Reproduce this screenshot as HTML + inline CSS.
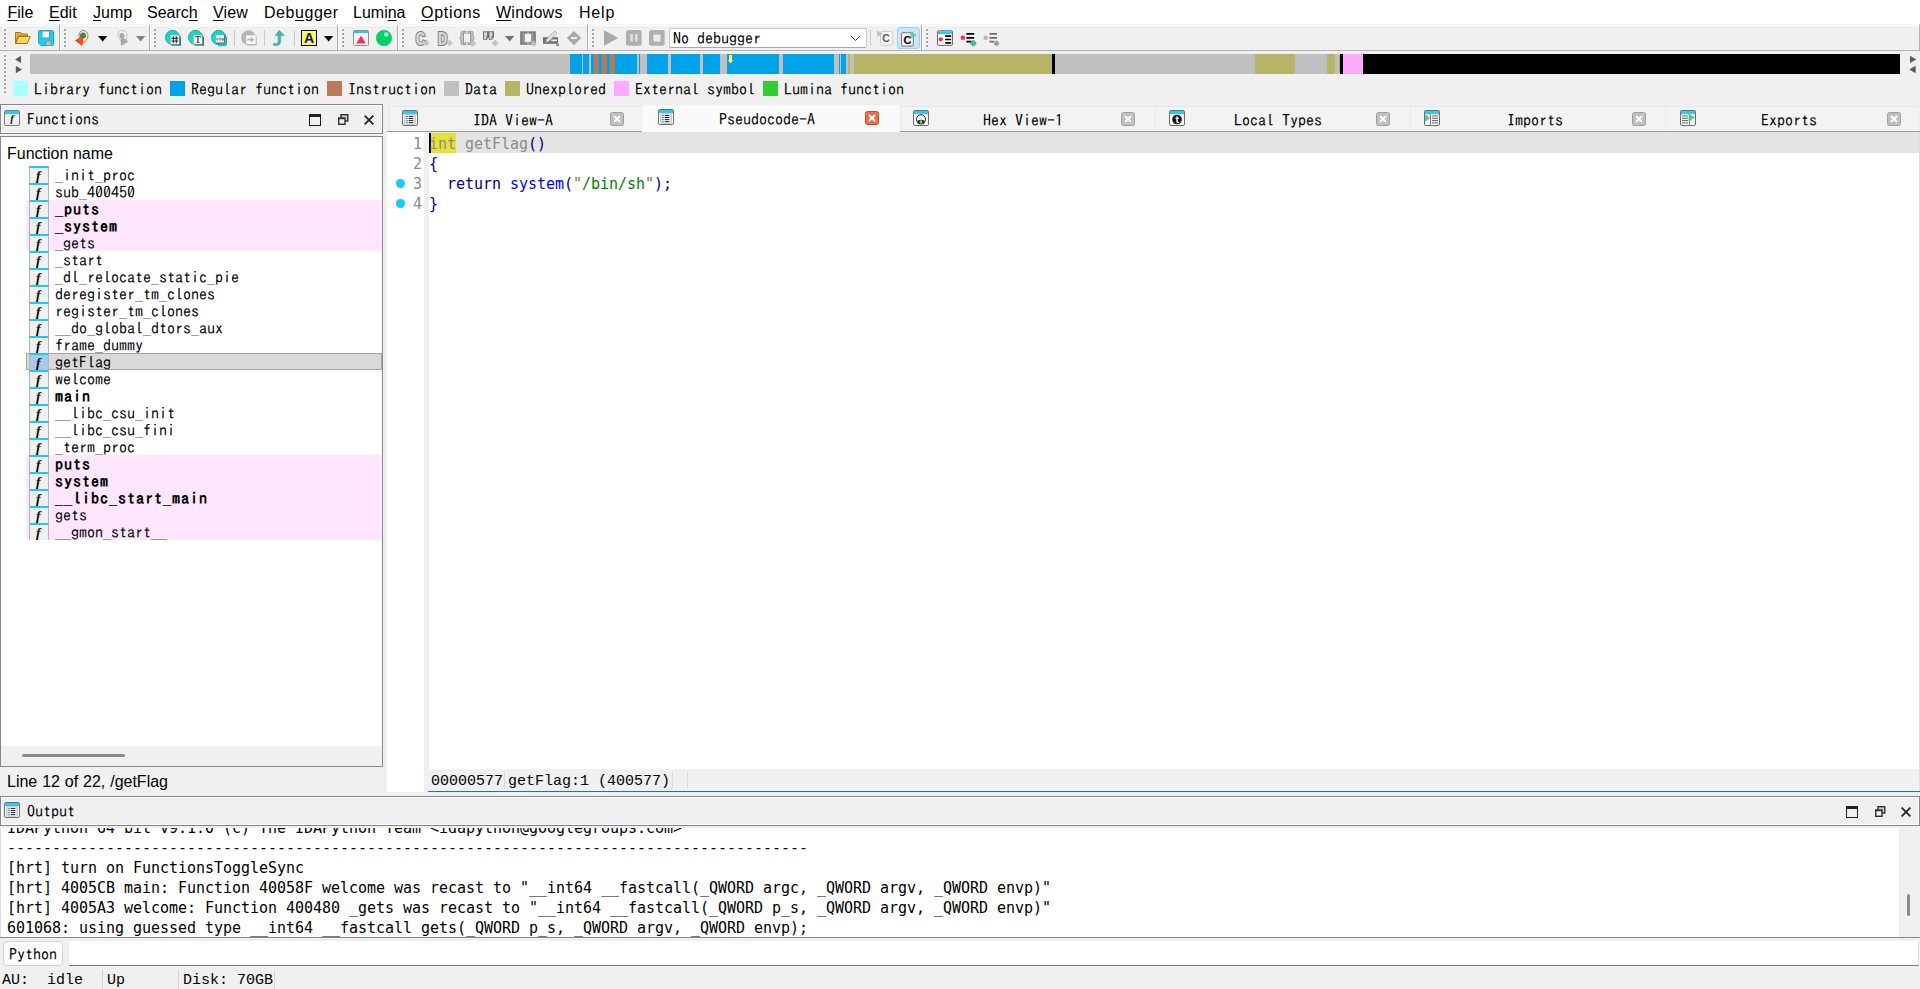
<!DOCTYPE html>
<html lang="en"><head><meta charset="utf-8"><title>IDA</title>
<style>
*{box-sizing:border-box}
html,body{margin:0;padding:0}
body{width:1920px;height:989px;background:#f0f0f0;overflow:hidden;position:relative;color:#000;
 font-family:"Liberation Sans",sans-serif;font-size:16px}
.abs{position:absolute}
.ss{font-family:"IPAGothic","WenQuanYi Zen Hei Mono","Liberation Mono",monospace;font-size:16px;white-space:pre;line-height:16px}
.cm{font-family:"DejaVu Sans Mono","Liberation Mono",monospace;font-size:15px;white-space:pre;letter-spacing:-0.03px}
.cn{font-family:"Liberation Mono",monospace;font-size:15px;white-space:pre}
/* menu */
#menubar{position:absolute;left:0;top:0;width:1920px;height:24px;background:#fff}
.mi{position:absolute;top:3px;height:20px;line-height:20px;font-size:16px;white-space:nowrap}
.mi u{text-decoration:underline;text-underline-offset:1.5px;text-decoration-thickness:1px}
/* toolbar */
#tb{position:absolute;left:0;top:24px;width:1920px;height:27px;border-top:1px solid #f4f4f4;border-bottom:1px solid #b4b4b4;border-right:1px solid #b4b4b4;box-shadow:inset 0 1px 0 #fdfdfd}
.handle{position:absolute;width:3px;background-image:linear-gradient(to bottom,#a4a4a4 0,#a4a4a4 2px,transparent 2px),linear-gradient(to bottom,#fff 0,#fff 2px,transparent 2px);background-size:2px 4px,2px 4px;background-position:1px 1px,0 0;background-repeat:repeat-y,repeat-y}
.vsep{position:absolute;top:0;width:2px;height:25px;border-left:1px solid #acacac;background:#fff}
.tsep{position:absolute;top:5px;width:1px;height:16px;background:#c8c8c8}
.ic{position:absolute;top:5px;width:16px;height:16px;overflow:visible}
/* nav */
/* legend */
#legend{position:absolute;left:0;top:78px;width:1000px;height:24px}
.sq{position:absolute;top:3px;width:15px;height:15px}
.lt{position:absolute;top:3px}
/* functions dock */
.dockt{position:absolute;height:30px;border:1px solid #828790;background:#f0f0f0;box-shadow:inset 0 0 0 1px #fcfcfc}
#flist{position:absolute;left:0;top:0;width:383px;height:0}
.fr{position:absolute;left:26px;width:356px;height:17px}
.fr.pk{background:#ffe6ff}
.fr.sel{background:#d9d9d9;border:1px solid #a6a6a6}
.fi{position:absolute;left:3px;top:0;width:20px;height:17px;border-left:1px solid #b4b4b4;border-right:1px solid #b4b4b4;background:#f0f0f0;border-top:2px solid #1ec8f0}
.fr.sel .fi{left:2px;top:-1px;background:#a9cbe8}
.fi i{position:absolute;left:6px;top:1px;font-family:"Liberation Serif",serif;font-weight:bold;font-style:italic;font-size:13.5px;line-height:13px}
.fn{position:absolute;left:29px;top:1px}
.fr.sel .fn{left:28px;top:0}
.fn b{font-weight:bold;letter-spacing:1px}
/* code */
#code{position:absolute;left:0;top:0}
.cl{position:absolute;left:387px;height:20px;line-height:20px;width:1500px}
.ln{position:absolute;left:17px;top:1px;width:18px;text-align:right;color:#8a8a8a}
.ct{position:absolute;left:42px;top:1px}
.dot{position:absolute;left:9.2px;top:6.2px;width:8.4px;height:8.4px;border-radius:50%;background:#1ec8fa}
.cg{color:#8c8c8c}.cv{color:#000080}.cb{color:#0000ff}.cs{color:#008000}.cq{color:#7a7a00}
/* output */
#out{position:absolute;left:0;top:828px;width:1899px;height:109px;background:#fff;overflow:hidden;border-left:1px solid #dcdcdc}
.ol{position:absolute;left:6px;height:20px;line-height:20px}

</style></head>
<body>
<div id="menubar"><span class="mi" style="left:7.5px;letter-spacing:0px"><u>F</u>ile</span><span class="mi" style="left:49px;letter-spacing:0px"><u>E</u>dit</span><span class="mi" style="left:93px;letter-spacing:0px"><u>J</u>ump</span><span class="mi" style="left:147px;letter-spacing:0px">Searc<u>h</u></span><span class="mi" style="left:213px;letter-spacing:0.1px"><u>V</u>iew</span><span class="mi" style="left:264px;letter-spacing:0.55px">Deb<u>u</u>gger</span><span class="mi" style="left:353px;letter-spacing:0px">Lumi<u>n</u>a</span><span class="mi" style="left:421px;letter-spacing:0.7px"><u>O</u>ptions</span><span class="mi" style="left:496px;letter-spacing:0.25px"><u>W</u>indows</span><span class="mi" style="left:579px;letter-spacing:0.8px">Help</span></div>
<div id="tb">
<div class="handle" style="left:3px;top:3px;height:20px"></div>
<svg class="ic" style="left:15px" viewBox="0 0 16 16"><path d="M0.5 2.5h5l1.5 1.5h5.5v2h-9l-3 7.5z" fill="#e8b030" stroke="#a07818" stroke-width="1"/><path d="M3.6 6.5h11.6l-3 7h-11.4z" fill="#ffd860" stroke="#a07818" stroke-width="1" stroke-linejoin="round"/></svg>
<svg class="ic" style="left:38px" viewBox="0 0 16 16"><path d="M1.5 0.5h13q1 0 1 1v13q0 1-1 1h-11.5l-2.500-2.500v-11.500q0-1 1-1z" fill="#12d0fa" stroke="#20a8d0" stroke-width="1"/><rect x="4" y="1" width="7.500" height="7" fill="#f2f2f2" stroke="#6898a8" stroke-width="1"/><rect x="8" y="11" width="5" height="4.500" fill="#c0c0c0" stroke="#7c98a0" stroke-width="1"/></svg>
<div class="vsep" style="left:59px"></div>
<div class="handle" style="left:63px;top:3px;height:20px"></div>
<svg class="ic" style="left:75px" viewBox="0 0 16 16"><path d="M8 0.500c3 0 5 2.200 5 5c0 3-2.500 6-4.500 7.500l-4-5.500c-1.500-3 0.500-7 3.500-7z" fill="#ffeab0" stroke="#807040" stroke-width="0.800"/><circle cx="8" cy="5.500" r="2.600" fill="#10a080" stroke="#406050" stroke-width="0.800"/><path d="M0.500 10.500l7.500-4.500l-1 9.500z" fill="#ff4a12" stroke="#c83000" stroke-width="0.600"/></svg>
<svg class="abs" style="left:98px;top:10.600px" width="10" height="6" viewBox="0 0 10 6"><path d="M0 0h9.300l-4.650 5.400z" fill="#000"/></svg>
<svg class="ic" style="left:115px" viewBox="0 0 16 16"><path d="M7 0.500c3 0 5 2.200 5 5c0 3-2.500 6-4.500 7.500l-4-5.500c-1.500-3 0.500-7 3.500-7z" fill="#f4f4f4" stroke="#b8b8b8" stroke-width="0.800"/><circle cx="7" cy="5.500" r="2.600" fill="#a8a8a8"/><path d="M5.500 6l8 5.500l-7.500 4.500z" fill="#a8a8a8"/></svg>
<svg class="abs" style="left:136px;top:10.600px" width="10" height="6" viewBox="0 0 10 6"><path d="M0 0h9.300l-4.650 5.400z" fill="#808088"/></svg>
<div class="vsep" style="left:149px"></div>
<div class="handle" style="left:153px;top:3px;height:20px"></div>
<svg class="ic" style="left:165px" viewBox="0 0 16 16"><circle cx="7.600" cy="7.500" r="7.200" fill="#10d8c8" stroke="#208078" stroke-width="0.600"/><path d="M6.500 6.500h9.500v9.200h-9.500z" fill="#387870"/><rect x="5.300" y="5.100" width="8.900" height="9" fill="#fff" stroke="#8a9a9a" stroke-width="0.500"/><path d="M8.300 6.300v6.800M11.300 6.300v6.800M6.400 8.400h6.800M6.400 11h6.800" stroke="#282828" stroke-width="1.100" fill="none"/></svg>
<svg class="ic" style="left:188px" viewBox="0 0 16 16"><circle cx="7.600" cy="7.500" r="7.200" fill="#10d8c8" stroke="#208078" stroke-width="0.600"/><path d="M6.500 6.500h9.500v9.200h-9.500z" fill="#387870"/><rect x="5.300" y="5.100" width="8.900" height="9" fill="#fff" stroke="#8a9a9a" stroke-width="0.500"/><text x="9.750" y="13.300" text-anchor="middle" font-family="Liberation Serif,serif" font-size="11" fill="#101010">T</text></svg>
<svg class="ic" style="left:211px" viewBox="0 0 16 16"><circle cx="7.600" cy="7.500" r="7.200" fill="#10d8c8" stroke="#208078" stroke-width="0.600"/><path d="M6 7h9.500v7.200q0 1.500-1.500 1.500h-6.500z" fill="#10d8c8" stroke="#208078" stroke-width="0.600"/><rect x="4.900" y="5.100" width="8.700" height="7.900" fill="#fff"/><path d="M4.900 13h8.700v-7.900" fill="none" stroke="#505050" stroke-width="0.900"/><path d="M5.400 7.800l0.900 2.600l0.900-2.600M8.200 9.100c0-1.700 1.900-1.700 1.900 0s-1.900 1.700-1.900 0M10.800 7.800l0.700 2.600l0.600-1.800l0.600 1.800l0.700-2.600" stroke="#606060" stroke-width="0.700" fill="none"/></svg>
<div class="tsep" style="left:234px"></div>
<svg class="ic" style="left:241px" viewBox="0 0 16 16"><circle cx="7.600" cy="7.700" r="7.400" fill="#b6b6b6"/><path d="M6 6.200h9.700v9.200h-9.700z" fill="#b0b0b0"/><rect x="5.200" y="5.300" width="9.500" height="8.800" fill="#fafafa"/><path d="M6.300 8.800h3.600v-2.100l3.400 3l-3.400 3v-2.100h-3.600z" fill="#b4b4b4"/></svg>
<div class="tsep" style="left:264px"></div>
<svg class="ic" style="left:272px" viewBox="0 0 16 16"><path d="M7.300 0.300l5.100 5.200h-3.700v5.500c0 3.200-1.800 4.500-4 4.500h-2.500c-1.400 0-1.400-2 0-2h2.300c1 0 1.600-0.800 1.600-2.400v-5.600h-3.100z" fill="#40b8b8" stroke="#309898" stroke-width="0.500"/></svg>
<div class="tsep" style="left:294px"></div>
<svg class="ic" style="left:301px" viewBox="0 0 16 16"><rect x="0.500" y="0.500" width="15" height="15" fill="#ffff40" stroke="#000080" stroke-width="1"/><text x="8" y="13" text-anchor="middle" font-family="Liberation Sans,sans-serif" font-weight="bold" font-size="14" fill="#101090">A</text></svg>
<svg class="abs" style="left:324px;top:10.600px" width="10" height="6" viewBox="0 0 10 6"><path d="M0 0h9.300l-4.650 5.400z" fill="#000"/></svg>
<div class="vsep" style="left:337px"></div>
<div class="handle" style="left:341px;top:3px;height:20px"></div>
<svg class="ic" style="left:353px" viewBox="0 0 16 16"><rect x="0.500" y="0.500" width="15" height="15" rx="1" fill="#f4f4f4" stroke="#909090" stroke-width="1"/><rect x="1" y="1" width="14" height="2" fill="#1ec8f0"/><path d="M8 5.500l4.800 8h-9.600z" fill="#ff3050"/></svg>
<svg class="ic" style="left:376px" viewBox="0 0 16 16"><circle cx="8" cy="8" r="7.700" fill="#00d068" stroke="#00a850" stroke-width="0.500"/><circle cx="10.300" cy="4.500" r="2.200" fill="#a8f4c8"/></svg>
<div class="vsep" style="left:397px"></div>
<div class="handle" style="left:401px;top:3px;height:20px"></div>
<svg class="ic" style="left:416px" viewBox="0 0 16 16"><text x="-0.700" y="14.900" font-family="Liberation Mono,monospace" font-weight="bold" font-size="21" transform="scale(0.800 1)" fill="#d6d6d6" stroke="#787878" stroke-width="2" paint-order="stroke">C</text><path d="M9.4 10.4h2v1.600h1.600v2h-1.600v1.600h-2v-1.600h-1.600v-2h1.600z" fill="#c4c4c4" stroke="#b0b0b0" stroke-width="0.300"/></svg>
<svg class="ic" style="left:438px" viewBox="0 0 16 16"><text x="-0.700" y="14.900" font-family="Liberation Mono,monospace" font-weight="bold" font-size="21" transform="scale(0.800 1)" fill="#d6d6d6" stroke="#787878" stroke-width="2" paint-order="stroke">D</text><path d="M10.6 10.4h2v1.600h1.600v2h-1.600v1.600h-2v-1.600h-1.600v-2h1.600z" fill="#c4c4c4" stroke="#b0b0b0" stroke-width="0.300"/></svg>
<svg class="ic" style="left:459px" viewBox="0 0 16 16"><path d="M3.500 1.300h9q1.500 0 1.500 1.500v3.200l1.300 2l-1.300 2v3.200q0 1.500-1.500 1.500h-9q-1.500 0-1.500-1.500v-3.200l-1.300-2l1.300-2v-3.200q0-1.500 1.500-1.500z" fill="#c8c8c8" stroke="#8a8a8a" stroke-width="0.800"/><rect x="4.300" y="3" width="7.400" height="10" fill="#f0f0f0" stroke="#808080" stroke-width="0.900"/><rect x="7" y="1.300" width="2" height="1.700" fill="#d8d8d8"/><rect x="7" y="13" width="2" height="1.700" fill="#d8d8d8"/><path d="M12.8 10.9h2v1.600h1.600v2h-1.600v1.600h-2v-1.600h-1.600v-2h1.600z" fill="#c4c4c4" stroke="#b0b0b0" stroke-width="0.300"/></svg>
<svg class="ic" style="left:483px" viewBox="0 0 16 16"><path d="M0 1.200h11v6.800h-1.500v1.800h-3.700v-1.800h-1.400v1.800h-4.400z" fill="#727272"/><rect x="1.200" y="2.300" width="2.800" height="4" fill="#dcdcdc"/><rect x="6.500" y="2.300" width="2.800" height="4" fill="#dcdcdc"/><rect x="1.200" y="6.500" width="2" height="2.200" fill="#f4f4f4"/><rect x="6.500" y="6.500" width="2" height="2" fill="#f4f4f4"/><path d="M11.2 10.6h2v1.600h1.600v2h-1.600v1.600h-2v-1.600h-1.600v-2h1.600z" fill="#c4c4c4" stroke="#b0b0b0" stroke-width="0.300"/></svg>
<svg class="abs" style="left:505px;top:10.600px" width="10" height="6" viewBox="0 0 10 6"><path d="M0 0h9.300l-4.650 5.400z" fill="#707078"/></svg>
<svg class="ic" style="left:520px" viewBox="0 0 16 16"><rect x="0" y="1.200" width="16" height="13.700" fill="#9a9a9a"/><path d="M0.600 1.800h6.400v1.200h-4.600v10.100h4.600v1.200h-6.400zM15.400 1.800h-6.400v1.200h4.600v10.100h-4.600v1.200h6.400z" fill="#7c7c7c"/><rect x="7.300" y="1.200" width="1.400" height="13.700" fill="#c0c0c0"/><rect x="5" y="4" width="6" height="7.800" fill="#f4f4f4"/><path d="M12.5 10.9h2v1.600h1.600v2h-1.600v1.600h-2v-1.600h-1.600v-2h1.600z" fill="#c4c4c4" stroke="#b0b0b0" stroke-width="0.300"/></svg>
<svg class="ic" style="left:543px" viewBox="0 0 16 16"><rect x="0" y="7.200" width="15" height="6.600" fill="#727272"/><path d="M13 13.800h3v2.200h-3z" fill="#a0a0a0"/><path d="M13 16l3-3v3z" fill="#8a8a8a"/><rect x="8.300" y="9.500" width="5.500" height="1.700" fill="#f4f4f4"/><path d="M2.600 12.200l1-3l7.400-7.400q1-0.800 2 0.200q1 1 0.200 2l-7.400 7.400z" fill="#e4e4e4" stroke="#9a9a9a" stroke-width="0.700"/></svg>
<svg class="ic" style="left:566px" viewBox="0 0 16 16"><path d="M8 0.900l7.200 7.100l-7.200 7.200l-7.200-7.200z" fill="#a8a8a8"/><rect x="5" y="7.200" width="6" height="1.700" fill="#f8f8f8"/></svg>
<div class="vsep" style="left:587px"></div>
<div class="handle" style="left:591px;top:3px;height:20px"></div>
<svg class="ic" style="left:604px" viewBox="0 0 16 16"><path d="M0 0.300l14.300 7.700l-14.300 7.700z" fill="#a8a8a8"/></svg>
<svg class="ic" style="left:626px" viewBox="0 0 16 16"><rect x="0" y="0" width="15.700" height="15.700" rx="2.500" fill="#b0b0b0"/><rect x="4.300" y="4" width="2.500" height="7.500" fill="#e0e0e0"/><rect x="9" y="4" width="2.500" height="7.500" fill="#e0e0e0"/></svg>
<svg class="ic" style="left:649px" viewBox="0 0 16 16"><rect x="0" y="0" width="15.700" height="15.700" rx="2.500" fill="#b0b0b0"/><rect x="4.500" y="4.500" width="7" height="7" fill="#ececec"/></svg>
<div class="abs" style="left:669px;top:2.500px;width:198px;height:20.500px;background:#fff;border:1px solid #c6c6c6;border-bottom-color:#a8a8a8;border-radius:2px"></div>
<span class="ss abs" style="left:673px;top:5px">No debugger</span>
<svg class="abs" style="left:850px;top:10px" width="11" height="7" viewBox="0 0 11 7"><path d="M0.800 0.800l4.700 4.700l4.700-4.700" fill="none" stroke="#404040" stroke-width="1"/></svg>
<div class="tsep" style="left:870px"></div>
<svg class="ic" style="left:877px" viewBox="0 0 16 16"><rect x="3.500" y="1.500" width="12.300" height="13.700" rx="1.500" fill="#f6f6f6" stroke="#c8c8c8" stroke-width="0.900"/><path d="M0.200 0.400l5.700 3.500l-5.700 3.200z" fill="#c2c2c2"/><text x="9" y="12" text-anchor="middle" font-family="Liberation Sans,sans-serif" font-weight="bold" font-size="10.500" fill="#5c5c5c">C</text></svg>
<div class="abs" style="left:897px;top:2px;width:23px;height:22px;background:#cce4f7;border:1px solid #99d1ff;border-radius:3px"></div>
<svg class="ic" style="left:901px" viewBox="0 0 16 16"><rect x="0.500" y="2.700" width="11.800" height="13.400" rx="1.500" fill="#f2f2f2" stroke="#6c6c6c" stroke-width="0.900"/><text x="6.400" y="13.800" text-anchor="middle" font-family="Liberation Sans,sans-serif" font-weight="bold" font-size="11" fill="#000">C</text><path d="M9.800 1.700l5.500 3.300l-5.500 3z" fill="#50e090" stroke="#38b070" stroke-width="0.300"/></svg>
<div class="vsep" style="left:921px"></div>
<div class="handle" style="left:925px;top:3px;height:20px"></div>
<svg class="ic" style="left:937px" viewBox="0 0 16 16"><rect x="0.500" y="0.800" width="15" height="14.600" rx="1.200" fill="#fafafa" stroke="#6a6a6a" stroke-width="1"/><rect x="1" y="1.300" width="14" height="2.300" fill="#10d4fc"/><rect x="1" y="3.500" width="14" height="0.600" fill="#5a8a9a"/><circle cx="3.700" cy="9.300" r="2.100" fill="#ff2c54"/><path d="M8.200 6.100h6M8.200 9.500h6M8.200 12.900h6" stroke="#000" stroke-width="1.600"/></svg>
<svg class="ic" style="left:960px" viewBox="0 0 16 16"><circle cx="2.900" cy="7.800" r="2.300" fill="#ff2c54"/><path d="M6.400 3.900h7.800M6.400 7.800h7.800M6.400 11.700h5" stroke="#000" stroke-width="1.700"/><path d="M12.300 10.600h2v1.700h1.700v2h-1.700v1.700h-2v-1.700h-1.700v-2h1.700z" fill="#38d888" stroke="#208858" stroke-width="0.500"/></svg>
<svg class="ic" style="left:983px" viewBox="0 0 16 16"><circle cx="2.700" cy="7.800" r="2.300" fill="#b8b8b8"/><path d="M6.500 3.900h7.500M6.500 7.800h7.500M6.500 11.700h4.500" stroke="#6c6c6c" stroke-width="1.700"/><g fill="none" stroke="#9c9c9c" stroke-width="1.300"><path d="M13.500 10.600v5.400M10.800 13.300h5.400M11.600 11.400l3.800 3.800M15.400 11.400l-3.800 3.800"/></g><circle cx="13.500" cy="13.300" r="1.700" fill="#9c9c9c"/></svg>
</div>
<div id="navrow"><svg class="abs" style="left:0;top:52px" width="1920" height="26" viewBox="0 52 1920 26" shape-rendering="crispEdges"><rect x="30" y="54" width="540" height="20" fill="#c0c0c0"/><rect x="570" y="54" width="12" height="20" fill="#00a2e8"/><rect x="582" y="54" width="1" height="20" fill="#c0c0c0"/><rect x="583" y="54" width="6" height="20" fill="#00a2e8"/><rect x="589" y="54" width="2" height="20" fill="#c0c0c0"/><rect x="591" y="54" width="3" height="20" fill="#00a2e8"/><rect x="594" y="54" width="5" height="20" fill="#b97a57"/><rect x="599" y="54" width="3" height="20" fill="#00a2e8"/><rect x="602" y="54" width="5" height="20" fill="#b97a57"/><rect x="607" y="54" width="3" height="20" fill="#00a2e8"/><rect x="610" y="54" width="5" height="20" fill="#b97a57"/><rect x="615" y="54" width="22" height="20" fill="#00a2e8"/><rect x="637" y="54" width="2" height="20" fill="#c0c0c0"/><rect x="639" y="54" width="1" height="20" fill="#00a2e8"/><rect x="640" y="54" width="7" height="20" fill="#c0c0c0"/><rect x="647" y="54" width="21" height="20" fill="#00a2e8"/><rect x="668" y="54" width="3" height="20" fill="#c0c0c0"/><rect x="671" y="54" width="29" height="20" fill="#00a2e8"/><rect x="700" y="54" width="3" height="20" fill="#c0c0c0"/><rect x="703" y="54" width="17" height="20" fill="#00a2e8"/><rect x="720" y="54" width="7" height="20" fill="#c0c0c0"/><rect x="727" y="54" width="52" height="20" fill="#00a2e8"/><rect x="779" y="54" width="4" height="20" fill="#c0c0c0"/><rect x="783" y="54" width="51" height="20" fill="#00a2e8"/><rect x="834" y="54" width="5" height="20" fill="#c0c0c0"/><rect x="839" y="54" width="1" height="20" fill="#00a2e8"/><rect x="840" y="54" width="1" height="20" fill="#c0c0c0"/><rect x="841" y="54" width="5" height="20" fill="#00a2e8"/><rect x="846" y="54" width="2" height="20" fill="#c0c0c0"/><rect x="848" y="54" width="2" height="20" fill="#b5b567"/><rect x="850" y="54" width="4" height="20" fill="#c0c0c0"/><rect x="854" y="54" width="198" height="20" fill="#b5b567"/><rect x="1052" y="54" width="3" height="20" fill="#000"/><rect x="1055" y="54" width="200" height="20" fill="#c0c0c0"/><rect x="1255" y="54" width="40" height="20" fill="#b5b567"/><rect x="1295" y="54" width="32" height="20" fill="#c0c0c0"/><rect x="1327" y="54" width="8" height="20" fill="#b5b567"/><rect x="1335" y="54" width="4" height="20" fill="#c0c0c0"/><rect x="1339" y="54" width="1" height="20" fill="#b5b567"/><rect x="1340" y="54" width="3" height="20" fill="#000"/><rect x="1343" y="54" width="20" height="20" fill="#ffaaff"/><rect x="1363" y="54" width="537" height="20" fill="#000"/><path d="M729 55h3v5h1.200l-2.700 3.400l-2.700-3.400h1.200z" fill="#ffff50" shape-rendering="auto"/><g fill="#5a5a5a" shape-rendering="auto"><path d="M21 55.700v7.400l-6-3.700z"/><path d="M15.800 65.800v7.400l6.300-3.700z"/><path d="M1910 55.700v7.400l6.200-3.700z"/><path d="M1915.600 65.800v7.400l-6.300-3.700z"/></g></svg><div class="handle" style="left:3px;top:54px;height:40px"></div></div>
<div id="legend"><span class="sq" style="left:13px;background:#aaffff"></span><span class="lt ss" style="left:34px">Library function</span><span class="sq" style="left:170px;background:#00a2e8"></span><span class="lt ss" style="left:191px">Regular function</span><span class="sq" style="left:327px;background:#b97a57"></span><span class="lt ss" style="left:348px">Instruction</span><span class="sq" style="left:444px;background:#c0c0c0"></span><span class="lt ss" style="left:465px">Data</span><span class="sq" style="left:505px;background:#b5b567"></span><span class="lt ss" style="left:526px">Unexplored</span><span class="sq" style="left:614px;background:#ffaaff"></span><span class="lt ss" style="left:635px">External symbol</span><span class="sq" style="left:763px;background:#32cd32"></span><span class="lt ss" style="left:784px">Lumina function</span></div>
<div class="dockt" style="left:0;top:104px;width:383px"></div>
<svg class="abs" style="left:4px;top:110px" width="16" height="16" viewBox="0 0 16 16"><rect x="0.500" y="0.500" width="15" height="15" rx="1.500" fill="#f0f0f0" stroke="#7c7c7c" stroke-width="1"/><rect x="1" y="1" width="14" height="2.400" fill="#0cd8ff"/><rect x="1" y="3.400" width="14" height="0.700" fill="#5a8a9a"/><text x="8" y="12" text-anchor="middle" font-family="Liberation Serif,serif" font-style="italic" font-weight="bold" font-size="10.500" fill="#101010">f</text></svg>
<span class="ss abs" style="left:27px;top:111px">Functions</span>
<svg class="abs" style="left:309px;top:114px" width="12" height="12" viewBox="0 0 12 12"><rect x="0.500" y="0.500" width="11" height="11" fill="none" stroke="#202020" stroke-width="1"/><rect x="0" y="0" width="12" height="3" fill="#202020"/></svg>
<svg class="abs" style="left:338px;top:114px" width="11" height="11" viewBox="0 0 11 11"><rect x="3" y="0.700" width="6.800" height="6.300" fill="#d0d0d0" stroke="#303030" stroke-width="1.400"/><rect x="0.700" y="4" width="6.300" height="6.300" fill="#f0f0f0" stroke="#303030" stroke-width="1.400"/><rect x="0.700" y="4" width="6.300" height="1.200" fill="#303030"/></svg>
<svg class="abs" style="left:364px;top:115px" width="10" height="10" viewBox="0 0 10 10"><path d="M0.700 0.700l8.600 8.600M9.300 0.700l-8.600 8.600" stroke="#202020" stroke-width="1.700"/></svg>
<div class="abs" style="left:0;top:136px;width:383px;height:631px;background:#fff;border:1px solid #828790"></div>
<span class="abs" style="left:7px;top:144px;line-height:20px;width:106px;white-space:nowrap;text-align-last:justify">Function name</span>
<div id="flist"><div class="fr" style="top:166px"><span class="fi"><i>f</i></span><span class="fn ss">_init_proc</span></div><div class="fr" style="top:183px"><span class="fi"><i>f</i></span><span class="fn ss">sub_400450</span></div><div class="fr pk" style="top:200px"><span class="fi"><i>f</i></span><span class="fn ss"><b>_puts</b></span></div><div class="fr pk" style="top:217px"><span class="fi"><i>f</i></span><span class="fn ss"><b>_system</b></span></div><div class="fr pk" style="top:234px"><span class="fi"><i>f</i></span><span class="fn ss">_gets</span></div><div class="fr" style="top:251px"><span class="fi"><i>f</i></span><span class="fn ss">_start</span></div><div class="fr" style="top:268px"><span class="fi"><i>f</i></span><span class="fn ss">_dl_relocate_static_pie</span></div><div class="fr" style="top:285px"><span class="fi"><i>f</i></span><span class="fn ss">deregister_tm_clones</span></div><div class="fr" style="top:302px"><span class="fi"><i>f</i></span><span class="fn ss">register_tm_clones</span></div><div class="fr" style="top:319px"><span class="fi"><i>f</i></span><span class="fn ss">__do_global_dtors_aux</span></div><div class="fr" style="top:336px"><span class="fi"><i>f</i></span><span class="fn ss">frame_dummy</span></div><div class="fr sel" style="top:353px"><span class="fi"><i>f</i></span><span class="fn ss">getFlag</span></div><div class="fr" style="top:370px"><span class="fi"><i>f</i></span><span class="fn ss">welcome</span></div><div class="fr" style="top:387px"><span class="fi"><i>f</i></span><span class="fn ss"><b>main</b></span></div><div class="fr" style="top:404px"><span class="fi"><i>f</i></span><span class="fn ss">__libc_csu_init</span></div><div class="fr" style="top:421px"><span class="fi"><i>f</i></span><span class="fn ss">__libc_csu_fini</span></div><div class="fr" style="top:438px"><span class="fi"><i>f</i></span><span class="fn ss">_term_proc</span></div><div class="fr pk" style="top:455px"><span class="fi"><i>f</i></span><span class="fn ss"><b>puts</b></span></div><div class="fr pk" style="top:472px"><span class="fi"><i>f</i></span><span class="fn ss"><b>system</b></span></div><div class="fr pk" style="top:489px"><span class="fi"><i>f</i></span><span class="fn ss"><b>__libc_start_main</b></span></div><div class="fr pk" style="top:506px"><span class="fi"><i>f</i></span><span class="fn ss">gets</span></div><div class="fr pk" style="top:523px"><span class="fi"><i>f</i></span><span class="fn ss">__gmon_start__</span></div></div>
<div class="abs" style="left:1px;top:746px;width:381px;height:20px;background:#f0f0f0"></div>
<div class="abs" style="left:22px;top:754px;width:103px;height:3px;background:#8a8a8a;border-radius:1.500px"></div>
<span class="abs" style="left:7px;top:772px;line-height:20px;width:161px;white-space:nowrap;text-align-last:justify">Line 12 of 22, /getFlag</span>
<div class="abs" style="left:387px;top:131px;width:1533px;height:1px;background:#9a9a9a"></div>
<div class="abs" style="left:387px;top:132px;width:1533px;height:1px;background:#fff"></div>
<div class="abs" style="left:389px;top:106px;width:253px;height:25px;background:#f3f3f3;border-top:1px solid #e8e8e8;border-left:1px solid #e8e8e8"></div>
<svg class="abs" style="left:402px;top:110px" width="16" height="16" viewBox="0 0 16 16"><rect x="0.500" y="0.500" width="15" height="15" rx="1.500" fill="#fefefe" stroke="#6e6e6e" stroke-width="1"/><rect x="1" y="1" width="14" height="2.400" fill="#0cd8ff"/><rect x="1" y="3.400" width="14" height="0.800" fill="#5a8a9a"/><rect x="2.500" y="4.500" width="11" height="10" rx="1" fill="#d4d4d4" stroke="#b0b0b0" stroke-width="0.500"/><rect x="3.800" y="5" width="8.400" height="9" fill="#f4f4f4"/><g fill="#1080d0"><rect x="4.300" y="5.800" width="1.400" height="1.200"/><rect x="4.300" y="7.900" width="1.400" height="1.200"/><rect x="4.300" y="10" width="1.400" height="1.200"/><rect x="4.300" y="12.100" width="1.400" height="1.200"/></g><g fill="#202020"><rect x="6.700" y="5.900" width="4.600" height="1"/><rect x="6.700" y="8" width="4.600" height="1"/><rect x="6.700" y="10.100" width="4.600" height="1"/><rect x="6.700" y="12.200" width="4.600" height="1"/></g></svg>
<span class="ss abs" style="left:473px;top:112px">IDA View-A</span>
<svg class="abs" style="left:610px;top:112px" width="14" height="14" viewBox="0 0 14 14"><rect x="0.500" y="0.500" width="13" height="13" rx="2" fill="#c0c0c0" stroke="#a0a0a0" stroke-width="1"/><path d="M4 4l6 6M10 4l-6 6" stroke="#fff" stroke-width="2"/></svg>
<div class="abs" style="left:642px;top:105px;width:258px;height:28px;background:#fafafa;border-top:1px solid #f4f4f4"></div>
<svg class="abs" style="left:658px;top:109px" width="16" height="16" viewBox="0 0 16 16"><rect x="0.500" y="0.500" width="15" height="15" rx="1.500" fill="#fefefe" stroke="#6e6e6e" stroke-width="1"/><rect x="1" y="1" width="14" height="2.400" fill="#0cd8ff"/><rect x="1" y="3.400" width="14" height="0.800" fill="#5a8a9a"/><rect x="2.500" y="4.500" width="11" height="10" rx="1" fill="#d4d4d4" stroke="#b0b0b0" stroke-width="0.500"/><rect x="3.800" y="5" width="8.400" height="9" fill="#f4f4f4"/><g fill="#1080d0"><rect x="4.300" y="5.800" width="1.400" height="1.200"/><rect x="4.300" y="7.900" width="1.400" height="1.200"/><rect x="4.300" y="10" width="1.400" height="1.200"/><rect x="4.300" y="12.100" width="1.400" height="1.200"/></g><g fill="#202020"><rect x="6.700" y="5.900" width="4.600" height="1"/><rect x="6.700" y="8" width="4.600" height="1"/><rect x="6.700" y="10.100" width="4.600" height="1"/><rect x="6.700" y="12.200" width="4.600" height="1"/></g></svg>
<span class="ss abs" style="left:719px;top:111px">Pseudocode-A</span>
<svg class="abs" style="left:865px;top:111px" width="14" height="14" viewBox="0 0 14 14"><rect x="0.500" y="0.500" width="13" height="13" rx="2" fill="#e8704c" stroke="#c84828" stroke-width="1"/><path d="M4 4l6 6M10 4l-6 6" stroke="#fff" stroke-width="2"/></svg>
<div class="abs" style="left:900px;top:106px;width:255px;height:25px;background:#f3f3f3;border-top:1px solid #e8e8e8;border-left:1px solid #e8e8e8"></div>
<svg class="abs" style="left:913px;top:110px" width="16" height="16" viewBox="0 0 16 16"><rect x="0.500" y="0.500" width="15" height="15" rx="1.500" fill="#fefefe" stroke="#6e6e6e" stroke-width="1"/><rect x="1" y="1" width="14" height="2.400" fill="#0cd8ff"/><rect x="1" y="3.400" width="14" height="0.800" fill="#5a8a9a"/><circle cx="8" cy="9.300" r="4.500" fill="#fff" stroke="#222" stroke-width="1"/><ellipse cx="8" cy="12" rx="3.600" ry="2.300" fill="#222"/><path d="M8 9.700l1.700 2.300l-1.700 2.200l-1.700-2.200z" fill="#40f090"/></svg>
<span class="ss abs" style="left:983px;top:112px">Hex View-1</span>
<svg class="abs" style="left:1121px;top:112px" width="14" height="14" viewBox="0 0 14 14"><rect x="0.500" y="0.500" width="13" height="13" rx="2" fill="#c0c0c0" stroke="#a0a0a0" stroke-width="1"/><path d="M4 4l6 6M10 4l-6 6" stroke="#fff" stroke-width="2"/></svg>
<div class="abs" style="left:1155px;top:106px;width:255px;height:25px;background:#f3f3f3;border-top:1px solid #e8e8e8;border-left:1px solid #e8e8e8"></div>
<svg class="abs" style="left:1169px;top:110px" width="16" height="16" viewBox="0 0 16 16"><rect x="0.500" y="0.500" width="15" height="15" rx="1.500" fill="#fefefe" stroke="#6e6e6e" stroke-width="1"/><rect x="1" y="1" width="14" height="2.400" fill="#0cd8ff"/><rect x="1" y="3.400" width="14" height="0.800" fill="#5a8a9a"/><circle cx="8" cy="9.500" r="4.800" fill="#181818"/><path d="M7.300 6.500h1.500v1.300h1.200v1.200h-1.200v2.200q0 0.600 0.600 0.600h0.600v1.200h-1.200q-1.500 0-1.500-1.500v-2.500h-0.900v-1.200h0.900z" fill="#fff"/></svg>
<span class="ss abs" style="left:1234px;top:112px">Local Types</span>
<svg class="abs" style="left:1376px;top:112px" width="14" height="14" viewBox="0 0 14 14"><rect x="0.500" y="0.500" width="13" height="13" rx="2" fill="#c0c0c0" stroke="#a0a0a0" stroke-width="1"/><path d="M4 4l6 6M10 4l-6 6" stroke="#fff" stroke-width="2"/></svg>
<div class="abs" style="left:1410px;top:106px;width:255px;height:25px;background:#f3f3f3;border-top:1px solid #e8e8e8;border-left:1px solid #e8e8e8"></div>
<svg class="abs" style="left:1424px;top:110px" width="16" height="16" viewBox="0 0 16 16"><rect x="0.500" y="0.500" width="15" height="15" rx="1.500" fill="#fefefe" stroke="#6e6e6e" stroke-width="1"/><rect x="1" y="1" width="14" height="2.400" fill="#0cd8ff"/><rect x="1" y="3.400" width="14" height="0.800" fill="#5a8a9a"/><path d="M6.500 4v11.500" stroke="#808080" stroke-width="1"/><path d="M1.500 5l4 3l-4 3z" fill="#40d890" stroke="#30a060" stroke-width="0.500"/><path d="M8 6h6M8 8.300h6M8 10.600h6M8 12.900h6" stroke="#606060" stroke-width="1"/></svg>
<span class="ss abs" style="left:1507px;top:112px">Imports</span>
<svg class="abs" style="left:1632px;top:112px" width="14" height="14" viewBox="0 0 14 14"><rect x="0.500" y="0.500" width="13" height="13" rx="2" fill="#c0c0c0" stroke="#a0a0a0" stroke-width="1"/><path d="M4 4l6 6M10 4l-6 6" stroke="#fff" stroke-width="2"/></svg>
<div class="abs" style="left:1665px;top:106px;width:253px;height:25px;background:#f3f3f3;border-top:1px solid #e8e8e8;border-left:1px solid #e8e8e8"></div>
<svg class="abs" style="left:1680px;top:110px" width="16" height="16" viewBox="0 0 16 16"><rect x="0.500" y="0.500" width="15" height="15" rx="1.500" fill="#fefefe" stroke="#6e6e6e" stroke-width="1"/><rect x="1" y="1" width="14" height="2.400" fill="#0cd8ff"/><rect x="1" y="3.400" width="14" height="0.800" fill="#5a8a9a"/><path d="M9.500 4v11.500" stroke="#808080" stroke-width="1"/><path d="M2 6h6M2 8.300h6M2 10.600h6M2 12.900h6" stroke="#606060" stroke-width="1"/><path d="M9 4.500l5.500 3l-5.500 3.500z" fill="#40d890" stroke="#30a060" stroke-width="0.500"/></svg>
<span class="ss abs" style="left:1761px;top:112px">Exports</span>
<svg class="abs" style="left:1887px;top:112px" width="14" height="14" viewBox="0 0 14 14"><rect x="0.500" y="0.500" width="13" height="13" rx="2" fill="#c0c0c0" stroke="#a0a0a0" stroke-width="1"/><path d="M4 4l6 6M10 4l-6 6" stroke="#fff" stroke-width="2"/></svg>
<div class="abs" style="left:387px;top:132px;width:37px;height:660px;background:#fff"></div>
<div class="abs" style="left:424px;top:132px;width:5px;height:660px;background:#f0f0f0"></div>
<div class="abs" style="left:429px;top:132px;width:1490px;height:637px;background:#fff"></div>
<div class="abs" style="left:429px;top:132px;width:1490px;height:21px;background:#e4e4e4"></div>
<div class="abs" style="left:431px;top:133px;width:25px;height:20px;background:#e2e238"></div>
<div class="abs" style="left:429px;top:133px;width:2px;height:20px;background:#000"></div>
<div class="abs" style="left:1919px;top:132px;width:1px;height:660px;background:#d8e0ec"></div>
<div class="abs" style="left:428px;top:790.500px;width:1492px;height:1.500px;background:#1474c8"></div>
<div id="code" class="cm">
<div class="cl" style="top:133px"><span class="ln">1</span><span class="ct"><span class="cg">int getFlag</span><span class="cv">()</span></span></div>
<div class="cl" style="top:153px"><span class="ln">2</span><span class="ct"><span class="cv">{</span></span></div>
<div class="cl" style="top:173px"><span class="dot"></span><span class="ln">3</span><span class="ct"><span class="cv">  return </span><span class="cb">system</span><span class="cv">(</span><span class="cq">"</span><span class="cs">/bin/sh</span><span class="cq">"</span><span class="cv">);</span></span></div>
<div class="cl" style="top:193px"><span class="dot"></span><span class="ln">4</span><span class="ct"><span class="cv">}</span></span></div>
</div>
<span class="cn abs" style="left:431px;top:773px;line-height:17px">00000577</span>
<div class="abs" style="left:504px;top:771px;width:1px;height:18px;background:#dcdcdc"></div>
<span class="cn abs" style="left:508px;top:773px;line-height:17px">getFlag:1 (400577)</span>
<div class="abs" style="left:672px;top:771px;width:1px;height:18px;background:#dcdcdc"></div>
<div class="abs" style="left:687px;top:771px;width:1px;height:18px;background:#dcdcdc"></div>
<div class="dockt" style="left:0;top:796px;width:1920px"></div>
<svg class="abs" style="left:4px;top:802px" width="16" height="16" viewBox="0 0 16 16"><rect x="0.500" y="0.500" width="15" height="15" rx="1.500" fill="#fefefe" stroke="#6e6e6e" stroke-width="1"/><rect x="1" y="1" width="14" height="2.400" fill="#0cd8ff"/><rect x="1" y="3.400" width="14" height="0.800" fill="#5a8a9a"/><rect x="2.500" y="4.500" width="11" height="10" rx="1" fill="#d4d4d4" stroke="#b0b0b0" stroke-width="0.500"/><rect x="3.800" y="5" width="8.400" height="9" fill="#f4f4f4"/><g fill="#1080d0"><rect x="4.300" y="5.800" width="1.400" height="1.200"/><rect x="4.300" y="7.900" width="1.400" height="1.200"/><rect x="4.300" y="10" width="1.400" height="1.200"/><rect x="4.300" y="12.100" width="1.400" height="1.200"/></g><g fill="#202020"><rect x="6.700" y="5.900" width="4.600" height="1"/><rect x="6.700" y="8" width="4.600" height="1"/><rect x="6.700" y="10.100" width="4.600" height="1"/><rect x="6.700" y="12.200" width="4.600" height="1"/></g></svg>
<span class="ss abs" style="left:27px;top:803px">Output</span>
<svg class="abs" style="left:1846px;top:806px" width="12" height="12" viewBox="0 0 12 12"><rect x="0.500" y="0.500" width="11" height="11" fill="none" stroke="#202020" stroke-width="1"/><rect x="0" y="0" width="12" height="3" fill="#202020"/></svg>
<svg class="abs" style="left:1875px;top:806px" width="11" height="11" viewBox="0 0 11 11"><rect x="3" y="0.700" width="6.800" height="6.300" fill="#d0d0d0" stroke="#303030" stroke-width="1.400"/><rect x="0.700" y="4" width="6.300" height="6.300" fill="#f0f0f0" stroke="#303030" stroke-width="1.400"/><rect x="0.700" y="4" width="6.300" height="1.200" fill="#303030"/></svg>
<svg class="abs" style="left:1901px;top:807px" width="10" height="10" viewBox="0 0 10 10"><path d="M0.700 0.700l8.600 8.600M9.300 0.700l-8.600 8.600" stroke="#202020" stroke-width="1.700"/></svg>
<div id="out" class="cm">
<div class="ol" style="top:-10px">IDAPython 64<span style="visibility:hidden">-</span>bit v9.1.0 (c) The IDAPython Team &lt;idapython@googlegroups.com&gt;</div>
<div class="ol" style="top:10px">-----------------------------------------------------------------------------------------</div>
<div class="ol" style="top:30px">[hrt] turn on FunctionsToggleSync</div>
<div class="ol" style="top:50px">[hrt] 4005CB main: Function 40058F welcome was recast to "__int64 __fastcall(_QWORD argc, _QWORD argv, _QWORD envp)"</div>
<div class="ol" style="top:70px">[hrt] 4005A3 welcome: Function 400480 _gets was recast to "__int64 __fastcall(_QWORD p_s, _QWORD argv, _QWORD envp)"</div>
<div class="ol" style="top:90px">601068: using guessed type __int64 __fastcall gets(_QWORD p_s, _QWORD argv, _QWORD envp);</div>
</div>

<div class="abs" style="left:1907px;top:894px;width:3px;height:22px;background:#8a8a8a;border-radius:1.500px"></div>
<div class="abs" style="left:0;top:937px;width:1920px;height:1px;background:#828790"></div>
<div class="abs" style="left:3px;top:941px;width:60px;height:25px;background:#fdfdfd;border:1px solid #d2d2d2;border-radius:4px"></div>
<span class="ss abs" style="left:9px;top:946px">Python</span>
<div class="abs" style="left:69px;top:941px;width:1850px;height:25px;background:#fff;border-bottom:1px solid #7a7a7a;border-right:1px solid #e0e0e0"></div>
<span class="cn abs" style="left:2px;top:972px;line-height:17px">AU:  idle</span>
<div class="abs" style="left:102px;top:970px;width:1px;height:19px;background:#d4d4d4"></div>
<span class="cn abs" style="left:107px;top:972px;line-height:17px">Up</span>
<div class="abs" style="left:178px;top:970px;width:1px;height:19px;background:#d4d4d4"></div>
<span class="cn abs" style="left:183px;top:972px;line-height:17px">Disk: 70GB</span>
<div class="abs" style="left:274px;top:970px;width:1px;height:19px;background:#d4d4d4"></div>
</body></html>
